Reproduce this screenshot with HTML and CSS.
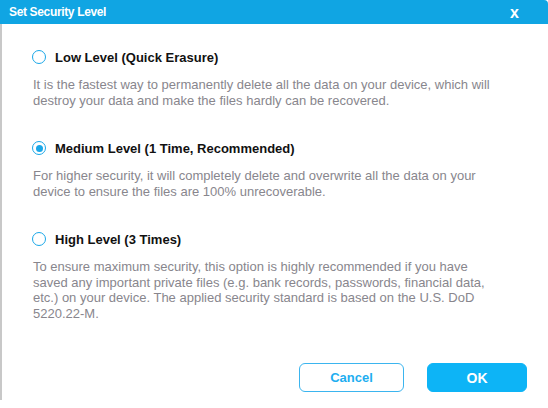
FILE: index.html
```html
<!DOCTYPE html>
<html>
<head>
<meta charset="utf-8">
<link rel="stylesheet" href="styles.css">
</head>
<body>
<div class="dialog">
  <div class="titlebar">
    <span class="title">Set Security Level</span>
    <span class="close">x</span>
  </div>
  <div class="body">
    <div class="option">
      <div class="label"><span class="radio"></span>Low Level (Quick Erasure)</div>
      <p class="desc">It is the fastest way to permanently delete all the data on your device, which will<br>destroy your data and make the files hardly can be recovered.</p>
    </div>
    <div class="option">
      <div class="label"><span class="radio checked"></span>Medium Level (1 Time, Recommended)</div>
      <p class="desc">For higher security, it will completely delete and overwrite all the data on your<br>device to ensure the files are 100% unrecoverable.</p>
    </div>
    <div class="option">
      <div class="label"><span class="radio"></span>High Level (3 Times)</div>
      <p class="desc">To ensure maximum security, this option is highly recommended if you have<br>saved any important private files (e.g. bank records, passwords, financial data,<br>etc.) on your device. The applied security standard is based on the U.S. DoD<br>5220.22-M.</p>
    </div>
  </div>
  <div class="actions">
    <button class="btn cancel">Cancel</button>
    <button class="btn ok">OK</button>
  </div>
</div>
</body>
</html>
```
FILE: styles.css
```css
html, body { margin: 0; padding: 0; background: #fff; }
body { width: 548px; height: 408px; overflow: hidden; font-family: "Liberation Sans", Arial, sans-serif; }
.dialog { width: 548px; height: 400px; display: flex; flex-direction: column; border-left: 2px solid #c8c8c8; box-sizing: border-box; }
.titlebar { height: 24px; margin-left: -2px; background: #10a5e3; color: #fff; display: flex; align-items: center; justify-content: space-between; padding: 0 0 0 9px; border-top-right-radius: 4px; }
.title { font-size: 12px; font-weight: bold; letter-spacing: -0.35px; }
.close { font-size: 16px; font-weight: bold; margin-right: 29px; margin-top: 1px; }
.body { padding: 25px 20px 0 31px; }
.option { margin-bottom: 32px; }
.label { display: flex; align-items: center; font-size: 13px; font-weight: bold; color: #111; height: 16px; }
.radio { width: 12px; height: 12px; border: 1.5px solid #1aa7e8; border-radius: 50%; margin: 0 9px 0 -1px; box-sizing: content-box; display: inline-flex; align-items: center; justify-content: center; }
.radio.checked::after { content: ""; width: 7px; height: 7px; border-radius: 50%; background: #1aa7e8; }
.desc { margin: 12px 0 0 0; font-size: 13px; line-height: 15.5px; color: #88868d; white-space: nowrap; }
.actions { margin-top: auto; display: flex; justify-content: flex-end; gap: 23px; padding: 0 21px 8px 0; }
.btn { width: 105px; height: 29px; border-radius: 6px; font-family: "Liberation Sans", Arial, sans-serif; font-size: 13px; font-weight: bold; box-sizing: border-box; }
.cancel { background: #fff; border: 1px solid #3bb5ef; color: #1eaef0; }
.ok { background: #0db4f6; border: 1px solid #0db4f6; color: #fff; width: 100px; font-size: 14px; }
```
